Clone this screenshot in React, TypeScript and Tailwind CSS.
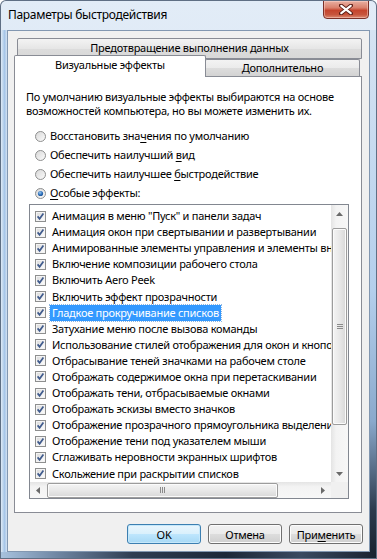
import React from "react";

const items = [
  "Анимация в меню \"Пуск\" и панели задач",
  "Анимация окон при свертывании и развертывании",
  "Анимированные элементы управления и элементы внутри окна",
  "Включение композиции рабочего стола",
  "Включить Aero Peek",
  "Включить эффект прозрачности",
  "Гладкое прокручивание списков",
  "Затухание меню после вызова команды",
  "Использование стилей отображения для окон и кнопок",
  "Отбрасывание теней значками на рабочем столе",
  "Отображать содержимое окна при перетаскивании",
  "Отображать тени, отбрасываемые окнами",
  "Отображать эскизы вместо значков",
  "Отображение прозрачного прямоугольника выделения",
  "Отображение тени под указателем мыши",
  "Сглаживать неровности экранных шрифтов",
  "Скольжение при раскрытии списков",
];

function Check() {
  return (
    <svg width="11" height="11" viewBox="0 0 11 11" className="shrink-0">
      <defs>
        <linearGradient id="cbg" x1="0" y1="0" x2="1" y2="1">
          <stop offset="0" stopColor="#dcdcdc" />
          <stop offset="1" stopColor="#fbfbfb" />
        </linearGradient>
      </defs>
      <rect x="0.5" y="0.5" width="10" height="10" fill="#f4f4f4" stroke="#8e8f8f" />
      <rect x="2" y="2" width="7" height="7" fill="url(#cbg)" />
      <path d="M2.6 5.4 L4.6 7.8 L8.4 2.6" fill="none" stroke="#3f5a8c" strokeWidth="1.7" />
    </svg>
  );
}

function Radio({ on }: { on?: boolean }) {
  return (
    <svg width="11" height="11" viewBox="0 0 11 11" className="shrink-0">
      <defs>
        <linearGradient id="rbg" x1="0" y1="0" x2="1" y2="1">
          <stop offset="0" stopColor="#d6d6d6" />
          <stop offset="1" stopColor="#fdfdfd" />
        </linearGradient>
        <radialGradient id="rdot" cx="0.4" cy="0.35" r="0.7">
          <stop offset="0" stopColor="#9ccaf2" />
          <stop offset="0.6" stopColor="#2d6fba" />
          <stop offset="1" stopColor="#1b4f91" />
        </radialGradient>
      </defs>
      <circle cx="5.5" cy="5.5" r="5" fill="url(#rbg)" stroke="#8e8f8f" strokeWidth="1" />
      {on && <circle cx="5.5" cy="5.5" r="2.6" fill="url(#rdot)" />}
    </svg>
  );
}

function Arrow({ dir }: { dir: "up" | "down" | "left" | "right" }) {
  const d =
    dir === "up"
      ? "M0 4 L3.5 0 L7 4 Z"
      : dir === "down"
      ? "M0 0 L7 0 L3.5 4 Z"
      : dir === "left"
      ? "M4 0 L4 7 L0 3.5 Z"
      : "M0 0 L4 3.5 L0 7 Z";
  const w = dir === "up" || dir === "down" ? 7 : 4;
  const h = dir === "up" || dir === "down" ? 4 : 7;
  return (
    <svg width={w} height={h} viewBox={`0 0 ${w} ${h}`}>
      <path d={d} fill="#6a6a6a" />
    </svg>
  );
}

function Btn({ children, def }: { children: React.ReactNode; def?: boolean }) {
  return (
    <div
      className={
        def
          ? "w-[74px] h-[20px] rounded-[3px] border border-[#3c7fb1] bg-[linear-gradient(to_bottom,#eaf6fd_0%,#d9f0fc_50%,#bee6fd_51%,#a7d9f5_100%)] shadow-[inset_0_0_0_1px_#c5e8fb] flex items-center justify-center text-[11px] leading-none text-black"
          : "w-[74px] h-[20px] rounded-[3px] border border-[#707070] bg-[linear-gradient(to_bottom,#f2f2f2_0%,#ebebeb_50%,#dddddd_51%,#cfcfcf_100%)] shadow-[inset_0_0_0_1px_#fcfcfc] flex items-center justify-center text-[11px] leading-none text-black"
      }
    >
      {children}
    </div>
  );
}

export default function App() {
  return (
    <div className="w-[377px] h-[559px] rounded-t-[6px] bg-[#5f6f84] p-px flex flex-col [font-family:'Noto_Sans',sans-serif] text-black tracking-[-0.25px]">
      <div className="flex-1 flex flex-col rounded-t-[5px] overflow-hidden bg-[linear-gradient(to_bottom,#e2ecf7,#c6d9ee)]">
        {/* title bar */}
        <div className="h-[29px] flex items-start justify-between shrink-0">
          <div className="pl-[7px] pt-[5px] text-[12px] leading-[18px] tracking-[-0.3px]">Параметры быстродействия</div>
          <div className="-mt-px mr-[7px] w-[46px] h-[19px] rounded-b-[4px] border border-[#7a3028] bg-[linear-gradient(to_bottom,#e9b0a2_0%,#d9806c_40%,#c5442d_55%,#c7553d_80%,#dc8a72_100%)] shadow-[inset_0_0_0_1px_rgba(255,220,210,0.45)] flex items-center justify-center">
            <svg width="14" height="11" viewBox="0 0 14 11">
              <path d="M2 1.5 L12 9.5 M12 1.5 L2 9.5" stroke="#5a1c14" strokeWidth="4" strokeLinecap="round" />
              <path d="M2.3 1.8 L11.7 9.2 M11.7 1.8 L2.3 9.2" stroke="#ffffff" strokeWidth="2.2" strokeLinecap="round" />
            </svg>
          </div>
        </div>
        {/* middle */}
        <div className="flex-1 flex">
          <div className="w-[6px] bg-[linear-gradient(to_right,#dfeaf6_0%,#b9d2ec_40%,#a6c5e8_60%,#d4e3f3_100%)]" />
          <div className="flex-1 border border-[#8297b1] bg-[#f0f0f0] flex flex-col">
            {/* tab control */}
            <div className="ml-[6px] mt-[7px] w-[348px] flex flex-col">
              <div className="ml-[3px] w-[345px] h-[21px] border border-[#898c95] rounded-t-[2px] bg-[linear-gradient(to_bottom,#f3f3f3,#e6e6e6_50%,#dcdcdc_51%,#d8d8d8)] text-[11px] leading-[16px] pt-[1px] text-center">
                Предотвращение выполнения данных
              </div>
              <div className="-mt-[4px] h-[21px] flex items-end">
                <div className="relative z-10 w-[192px] h-[22px] -mb-px border-l border-t border-r border-[#898c95] rounded-t-[2px] bg-white text-[11px] leading-[16px] pt-[1px] text-center">
                  Визуальные эффекты
                </div>
                <div className="-ml-px w-[155px] h-[17px] border border-b-0 border-[#898c95] rounded-t-[2px] bg-[linear-gradient(to_bottom,#f3f3f3,#ebebeb_50%,#dddddd_51%,#d3d3d3)] text-[11px] leading-[16px] text-center">
                  Дополнительно
                </div>
              </div>
              {/* panel */}
              <div className="h-[437px] border border-[#898c95] bg-white flex flex-col text-[11px]">
                <div className="mt-[13px] pl-[11px] leading-[14px]">
                  По умолчанию визуальные эффекты выбираются на основе
                  <br />
                  возможностей компьютера, но вы можете изменить их.
                </div>
                <div className="mt-[9px] flex flex-col pl-[20px]">
                  <div className="h-[19px] flex items-center gap-[4px]">
                    <Radio />
                    <span>
                      Восстановить зна<span className="underline underline-offset-2">ч</span>ения по умолчанию
                    </span>
                  </div>
                  <div className="h-[19px] flex items-center gap-[4px]">
                    <Radio />
                    <span>
                      Обеспечить наилучший <span className="underline underline-offset-2">в</span>ид
                    </span>
                  </div>
                  <div className="h-[19px] flex items-center gap-[4px]">
                    <Radio />
                    <span>
                      Обеспечить наилучшее <span className="underline underline-offset-2">б</span>ыстродействие
                    </span>
                  </div>
                  <div className="h-[19px] flex items-center gap-[4px]">
                    <Radio on />
                    <span>
                      <span className="underline underline-offset-2">О</span>собые эффекты:
                    </span>
                  </div>
                </div>
                {/* list box */}
                <div className="mt-px ml-[14px] w-[320px] h-[295px] border border-[#828790] bg-white grid grid-cols-[301px_17px] grid-rows-[277px_16px]">
                  <div className="overflow-hidden pt-[3px] flex flex-col">
                    {items.map((t, i) => (
                      <div key={i} className="h-[16.1px] shrink-0 flex items-center pl-[5px] whitespace-nowrap">
                        <Check />
                        <span
                          className={
                            i === 6
                              ? "ml-[4px] px-[2px] h-[16px] leading-[16px] bg-[#3399ff] text-white outline outline-1 outline-dotted outline-[#8fb6e0]"
                              : "ml-[4px] px-[2px] h-[16px] leading-[16px]"
                          }
                        >
                          {t}
                        </span>
                      </div>
                    ))}
                  </div>
                  {/* vertical scrollbar */}
                  <div className="bg-[linear-gradient(to_right,#e4e4e4,#f3f3f3_30%,#f7f7f7)] flex flex-col items-center">
                    <div className="h-[17px] flex items-center justify-center">
                      <Arrow dir="up" />
                    </div>
                    <div className="mt-[6px] w-[15px] h-[197px] rounded-[2px] border border-[#9c9c9c] bg-[linear-gradient(to_right,#f4f4f4,#e8e8e8_50%,#d8d8d8)] shadow-[inset_0_0_0_1px_#fbfbfb] flex flex-col items-center justify-center gap-[1px]">
                      <div className="w-[6px] h-px bg-[#8a8a8a]" />
                      <div className="w-[6px] h-px bg-[#8a8a8a]" />
                      <div className="w-[6px] h-px bg-[#8a8a8a]" />
                    </div>
                    <div className="flex-1" />
                    <div className="h-[17px] flex items-center justify-center">
                      <Arrow dir="down" />
                    </div>
                  </div>
                  {/* horizontal scrollbar */}
                  <div className="bg-[linear-gradient(to_bottom,#e4e4e4,#f3f3f3_30%,#f7f7f7)] flex items-center">
                    <div className="w-[16px] flex items-center justify-center">
                      <Arrow dir="left" />
                    </div>
                    <div className="ml-[1px] w-[231px] h-[15px] rounded-[2px] border border-[#9c9c9c] bg-[linear-gradient(to_bottom,#f4f4f4,#e8e8e8_50%,#d8d8d8)] shadow-[inset_0_0_0_1px_#fbfbfb] flex items-center justify-center gap-[1px]">
                      <div className="w-px h-[6px] bg-[#8a8a8a]" />
                      <div className="w-px h-[6px] bg-[#8a8a8a]" />
                      <div className="w-px h-[6px] bg-[#8a8a8a]" />
                    </div>
                    <div className="flex-1" />
                    <div className="w-[16px] flex items-center justify-center">
                      <Arrow dir="right" />
                    </div>
                  </div>
                  <div className="bg-[#f0f0f0]" />
                </div>
              </div>
            </div>
            {/* buttons */}
            <div className="mt-[11px] pr-[6px] flex justify-end gap-[7px]">
              <Btn def>OK</Btn>
              <Btn>Отмена</Btn>
              <Btn>
                При<span className="underline underline-offset-2">м</span>енить
              </Btn>
            </div>
          </div>
          <div className="w-[6px] bg-[linear-gradient(to_bottom,#d6e4f3_0%,#b4cfec_50%,#8aa9cc_75%,#2c3a4c_92%,#1b2432_100%)]" />
        </div>
        <div className="h-[6px] shrink-0 bg-[linear-gradient(to_right,#a8c2de_0%,#6f86a3_15%,#2f3d52_35%,#1d2838_60%,#3a4a60_80%,#1a2230_100%)]" />
      </div>
    </div>
  );
}
